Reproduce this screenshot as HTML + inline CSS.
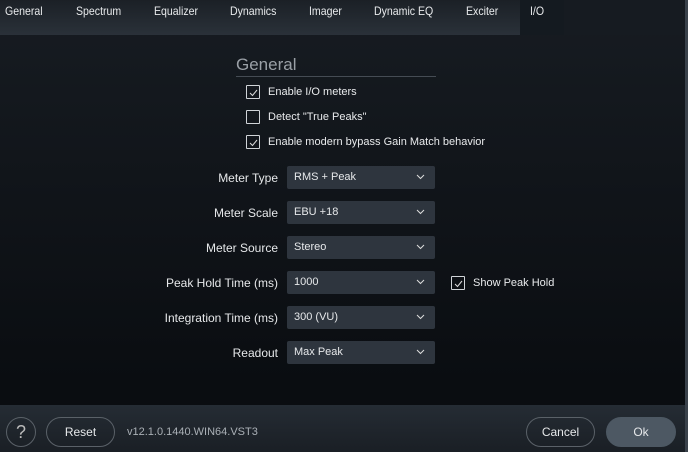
<!DOCTYPE html>
<html><head><style>
*{margin:0;padding:0;box-sizing:border-box}
body{width:688px;height:452px;overflow:hidden;background:linear-gradient(#171c22,#0a0d11 380px);font-family:"Liberation Sans",sans-serif;color:#e6e8ea;font-size:12px;position:relative}
.tabs{position:absolute;left:0;top:0;width:688px;height:35px;background:linear-gradient(#1b2026,#2a3139)}
.tab{position:absolute;top:4px;font-size:12px;color:#e8eaec;transform:scaleX(0.88);transform-origin:left}
.active{position:absolute;left:520px;top:0;width:44px;height:35px;background:#141a20}
.dark{position:absolute;left:564px;top:0;width:121px;height:35px;background:#161b21}
.edge{position:absolute;right:0;top:0;width:3px;height:452px;background:#3a424b}
.h{position:absolute;left:236px;top:55px;width:200px;border-bottom:1px solid #454c54;font-size:17px;color:#9aa0a6;padding-bottom:1px}
.cb{position:absolute;width:14px;height:14px;border:1px solid #d0d4d8;border-radius:1px}
.cb svg{position:absolute;left:2px;top:2px}
.lbl{position:absolute;font-size:11px;color:#e8eaec}
.rl{position:absolute;right:410px;font-size:12px;text-align:right;white-space:nowrap}
.dd{position:absolute;left:287px;width:148px;height:23px;background:#2e353e;border-radius:2px;font-size:11px;padding:5px 0 0 7px}
.dd svg{position:absolute;right:10px;top:8px}
.foot{position:absolute;left:0;top:405px;width:685px;height:47px;background:linear-gradient(#252c34,#1a1f25)}
.btn{position:absolute;border:1px solid #5a6168;border-radius:15px;height:30px;font-size:12px;text-align:center;line-height:28px}
</style></head><body>
<div class="tabs">
<div class="dark"></div><div class="active"></div>
<span class="tab" style="left:5px">General</span>
<span class="tab" style="left:76px">Spectrum</span>
<span class="tab" style="left:154px">Equalizer</span>
<span class="tab" style="left:230px">Dynamics</span>
<span class="tab" style="left:309px">Imager</span>
<span class="tab" style="left:374px">Dynamic EQ</span>
<span class="tab" style="left:466px">Exciter</span>
<span class="tab" style="left:530px">I/O</span>
</div>
<div class="edge"></div>
<div class="h">General</div>
<div class="cb" style="left:246px;top:85px"><svg width="9" height="9"><path d="M1 5l2.5 2.5L8 2" stroke="#ddd" fill="none"/></svg></div>
<div class="lbl" style="left:268px;top:86px">Enable I/O meters</div>
<div class="cb" style="left:246px;top:110px"></div>
<div class="lbl" style="left:268px;top:111px">Detect "True Peaks"</div>
<div class="cb" style="left:246px;top:135px"><svg width="9" height="9"><path d="M1 5l2.5 2.5L8 2" stroke="#ddd" fill="none"/></svg></div>
<div class="lbl" style="left:268px;top:136px">Enable modern bypass Gain Match behavior</div>

<div class="rl" style="top:171px">Meter Type</div>
<div class="dd" style="top:166px">RMS + Peak<svg width="9" height="6"><path d="M1 1l3.5 3.5L8 1" stroke="#ddd" fill="none"/></svg></div>
<div class="rl" style="top:206px">Meter Scale</div>
<div class="dd" style="top:201px">EBU +18<svg width="9" height="6"><path d="M1 1l3.5 3.5L8 1" stroke="#ddd" fill="none"/></svg></div>
<div class="rl" style="top:241px">Meter Source</div>
<div class="dd" style="top:236px">Stereo<svg width="9" height="6"><path d="M1 1l3.5 3.5L8 1" stroke="#ddd" fill="none"/></svg></div>
<div class="rl" style="top:276px">Peak Hold Time (ms)</div>
<div class="dd" style="top:271px">1000<svg width="9" height="6"><path d="M1 1l3.5 3.5L8 1" stroke="#ddd" fill="none"/></svg></div>
<div class="cb" style="left:451px;top:276px"><svg width="9" height="9"><path d="M1 5l2.5 2.5L8 2" stroke="#ddd" fill="none"/></svg></div>
<div class="lbl" style="left:473px;top:277px">Show Peak Hold</div>
<div class="rl" style="top:311px">Integration Time (ms)</div>
<div class="dd" style="top:306px">300 (VU)<svg width="9" height="6"><path d="M1 1l3.5 3.5L8 1" stroke="#ddd" fill="none"/></svg></div>
<div class="rl" style="top:346px">Readout</div>
<div class="dd" style="top:341px">Max Peak<svg width="9" height="6"><path d="M1 1l3.5 3.5L8 1" stroke="#ddd" fill="none"/></svg></div>

<div class="foot">
<div class="btn" style="left:6px;top:12px;width:30px;font-size:18px;color:#bbb;font-weight:normal">?</div>
<div class="btn" style="left:46px;top:12px;width:69px">Reset</div>
<div style="position:absolute;left:127px;top:21px;font-size:11px;color:#aab0b6">v12.1.0.1440.WIN64.VST3</div>
<div class="btn" style="left:526px;top:12px;width:69px">Cancel</div>
<div class="btn" style="left:606px;top:12px;width:70px;background:#4d5863;border-color:#4d5863">Ok</div>
</div>
</body></html>
